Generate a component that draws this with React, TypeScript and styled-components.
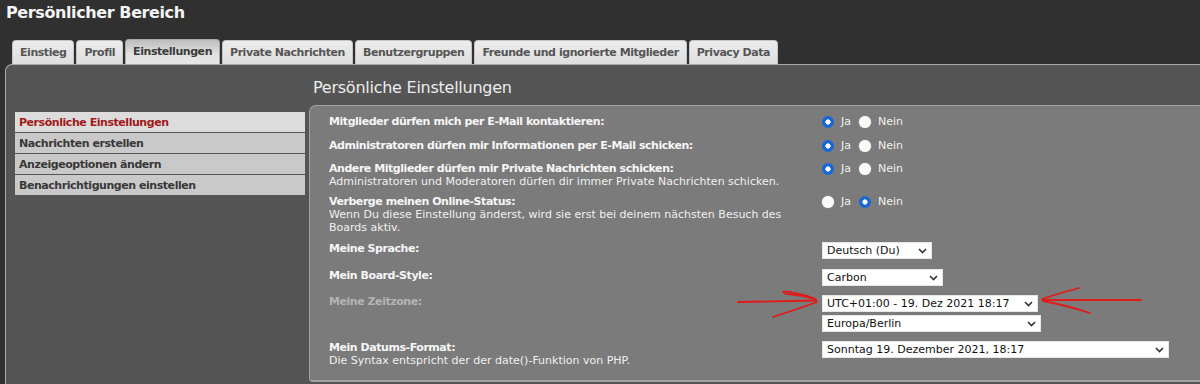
import styled, { createGlobalStyle } from 'styled-components';

const GlobalStyle = createGlobalStyle`
  html, body {
    margin: 0;
    padding: 0;
    background: #303030;
    overflow: hidden;
  }
  body {
    font-family: "DejaVu Sans", Verdana, sans-serif;
  }
`;

const Page = styled.div`
  width: 1200px;
  height: 384px;
  overflow: hidden;
  background: #303030;
`;

const Title = styled.h2`
  margin: 0;
  padding: 3px 0 0 6px;
  height: 37px;
  box-sizing: border-box;
  font-size: 16px;
  letter-spacing: -0.4px;
  font-weight: bold;
  color: #f4f4f4;
`;

const TabBar = styled.ul`
  list-style: none;
  margin: 0;
  padding: 0 0 0 12px;
  display: flex;
  align-items: flex-end;
  gap: 2px;
  height: 27px;
`;

const Tab = styled.li<{ $active?: boolean }>`
  height: ${(p) => (p.$active ? 25 : 24)}px;
  box-sizing: border-box;
  padding: 0 7px;
  display: flex;
  align-items: center;
  padding-bottom: ${(p) => (p.$active ? 2 : 0)}px;
  border: 1px solid ${(p) => (p.$active ? '#a8a8a8' : '#c4c4c4')};
  border-bottom: none;
  border-radius: 4px 4px 0 0;
  background: ${(p) =>
    p.$active ? 'linear-gradient(#bdbdbd, #e2e2e2 60%, #e6e6e6)' : 'linear-gradient(#ececec, #dedede)'};
  font-size: 11px;
  letter-spacing: -0.45px;
  font-weight: bold;
  color: ${(p) => (p.$active ? '#3a3a3a' : '#555')};
  white-space: nowrap;
`;

const Panel = styled.div`
  margin-left: 5px;
  margin-right: -20px;
  height: 320px;
  background: #555;
  border-top: 1px solid #ababab;
  border-left: 1px solid #ababab;
  border-top-left-radius: 7px;
  display: grid;
  grid-template-columns: 290px 1fr;
  grid-template-rows: 40px 1fr;
  column-gap: 4px;
  padding-left: 9px;
`;

const Heading = styled.h3`
  grid-column: 2;
  margin: 0;
  padding: 13px 0 0 4px;
  font-size: 16px;
  letter-spacing: -0.25px;
  font-weight: normal;
  color: #ececec;
`;

const Menu = styled.ul`
  grid-column: 1;
  list-style: none;
  margin: 7px 0 0;
  padding: 0;
  display: flex;
  flex-direction: column;
  gap: 1px;
`;

const MenuItem = styled.li<{ $current?: boolean }>`
  height: 20px;
  display: flex;
  align-items: center;
  padding-left: 4px;
  background: ${(p) => (p.$current ? '#dcdcdc' : '#c9c9c9')};
  font-size: 11px;
  letter-spacing: -0.45px;
  font-weight: bold;
  color: ${(p) => (p.$current ? '#a11a1a' : '#383838')};
`;

const Content = styled.div`
  grid-column: 2;
  position: relative;
  background: #7b7b7b;
  border-top: 1px solid #a2a2a2;
  border-left: 1px solid #a2a2a2;
  border-bottom: 2px solid #a2a2a2;
  border-top-left-radius: 7px;
  border-bottom-left-radius: 4px;
  padding: 9px 0 0 19px;
  margin-bottom: 3px;
`;

const Row = styled.div<{ $space: number }>`
  display: flex;
  margin-top: ${(p) => p.$space}px;
`;

const Term = styled.div`
  width: 493px;
  font-size: 11px;
  line-height: 13px;
`;

const Label = styled.div<{ $muted?: boolean }>`
  font-weight: bold;
  letter-spacing: -0.45px;
  color: ${(p) => (p.$muted ? '#b4b4b4' : '#f6f6f6')};
`;

const Hint = styled.div`
  color: #f0f0f0;
  width: 470px;
`;

const Controls = styled.div`
  display: flex;
  flex-direction: column;
  gap: 3px;
`;

const RadioGroup = styled.div`
  display: flex;
  align-items: center;
  height: 13px;
  font-size: 11px;
  color: #f0f0f0;
`;

const Radio = styled.span<{ $checked?: boolean }>`
  width: 12px;
  height: 12px;
  border-radius: 50%;
  box-sizing: border-box;
  background: ${(p) =>
    p.$checked ? 'radial-gradient(circle, #fff 0 2.4px, #1a67d4 2.8px)' : '#fafafa'};
  box-shadow: ${(p) => (p.$checked ? 'none' : '0 0 1px #d8d8d8')};
  margin-right: 7px;
`;

const RadioText = styled.span`
  margin-right: 8px;
`;

const SelectBox = styled.div<{ $width: number }>`
  width: ${(p) => p.$width}px;
  height: 17px;
  box-sizing: border-box;
  background: #fff;
  border: 1px solid #e6e6e6;
  display: flex;
  align-items: center;
  justify-content: space-between;
  padding: 0 4px 0 4px;
  font-size: 11px;
  color: #111;
  white-space: nowrap;
`;

const Arrows = styled.svg`
  position: absolute;
  left: 420px;
  top: 175px;
  pointer-events: none;
`;

const Chevron = () => (
  <svg width="9" height="6" viewBox="0 0 9 6">
    <path d="M1 1l3.5 3.5L8 1" fill="none" stroke="#333" strokeWidth="1.6" />
  </svg>
);

const Select = ({ width, children }: { width: number; children: string }) => (
  <SelectBox $width={width}>
    <span>{children}</span>
    <Chevron />
  </SelectBox>
);

const YesNo = ({ yes }: { yes: boolean }) => (
  <RadioGroup>
    <Radio $checked={yes} />
    <RadioText>Ja</RadioText>
    <Radio $checked={!yes} />
    <RadioText>Nein</RadioText>
  </RadioGroup>
);

const tabs = [
  'Einstieg',
  'Profil',
  'Einstellungen',
  'Private Nachrichten',
  'Benutzergruppen',
  'Freunde und ignorierte Mitglieder',
  'Privacy Data',
];

const menu = [
  'Persönliche Einstellungen',
  'Nachrichten erstellen',
  'Anzeigeoptionen ändern',
  'Benachrichtigungen einstellen',
];

const App = () => (
  <Page>
    <GlobalStyle />
    <Title>Persönlicher Bereich</Title>
    <TabBar>
      {tabs.map((t) => (
        <Tab key={t} $active={t === 'Einstellungen'}>
          {t}
        </Tab>
      ))}
    </TabBar>
    <Panel>
      <Heading>Persönliche Einstellungen</Heading>
      <Menu>
        {menu.map((m, i) => (
          <MenuItem key={m} $current={i === 0}>
            {m}
          </MenuItem>
        ))}
      </Menu>
      <Content>
        <Row $space={0}>
          <Term>
            <Label>Mitglieder dürfen mich per E-Mail kontaktieren:</Label>
          </Term>
          <YesNo yes />
        </Row>
        <Row $space={11}>
          <Term>
            <Label>Administratoren dürfen mir Informationen per E-Mail schicken:</Label>
          </Term>
          <YesNo yes />
        </Row>
        <Row $space={10}>
          <Term>
            <Label>Andere Mitglieder dürfen mir Private Nachrichten schicken:</Label>
            <Hint>Administratoren und Moderatoren dürfen dir immer Private Nachrichten schicken.</Hint>
          </Term>
          <YesNo yes />
        </Row>
        <Row $space={7}>
          <Term>
            <Label>Verberge meinen Online-Status:</Label>
            <Hint>
              Wenn Du diese Einstellung änderst, wird sie erst bei deinem nächsten Besuch des Boards aktiv.
            </Hint>
          </Term>
          <YesNo yes={false} />
        </Row>
        <Row $space={8}>
          <Term>
            <Label>Meine Sprache:</Label>
          </Term>
          <Select width={110}>Deutsch (Du)</Select>
        </Row>
        <Row $space={10}>
          <Term>
            <Label>Mein Board-Style:</Label>
          </Term>
          <Select width={121}>Carbon</Select>
        </Row>
        <Row $space={9}>
          <Term>
            <Label $muted>Meine Zeitzone:</Label>
          </Term>
          <Controls>
            <Select width={216}>UTC+01:00 - 19. Dez 2021 18:17</Select>
            <Select width={219}>Europa/Berlin</Select>
          </Controls>
        </Row>
        <Row $space={9}>
          <Term>
            <Label>Mein Datums-Format:</Label>
            <Hint>Die Syntax entspricht der der date()-Funktion von PHP.</Hint>
          </Term>
          <Select width={347}>Sonntag 19. Dezember 2021, 18:17</Select>
        </Row>
        <Arrows width="420" height="40" viewBox="0 0 420 40">
          <g fill="none" stroke="#e21a1a" strokeWidth="1.8" strokeLinecap="round">
            <path d="M8 21 L86 19.5" />
            <path d="M53 11 Q58 10 64 12 Q76 14 86 18.5" />
            <path d="M55 12.5 Q70 14 85 18" />
            <path d="M43 36 Q62 30 87 21" />
            <path d="M411 19 L313 19" />
            <path d="M349 7 Q330 12 312 18" />
            <path d="M360 32 Q335 24 313 20" />
          </g>
        </Arrows>
      </Content>
    </Panel>
  </Page>
);

export default App;
